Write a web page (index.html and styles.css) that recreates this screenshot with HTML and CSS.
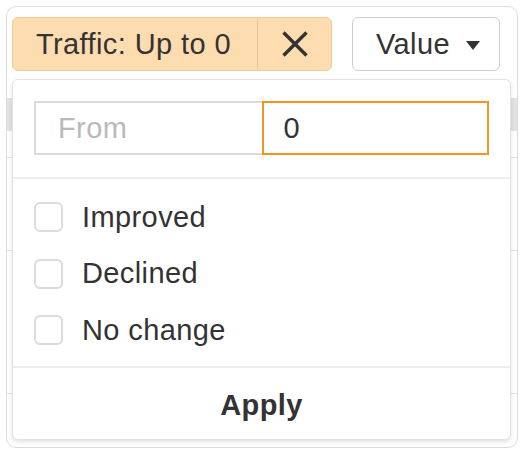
FILE: index.html
```html
<!DOCTYPE html>
<html>
<head>
<meta charset="utf-8">
<link rel="stylesheet" href="styles.css">
</head>
<body>
<div class="frame">
  <div class="toolbar">
    <div class="chip">
      <span class="chip-label">Traffic: Up to 0</span>
      <span class="chip-close">
        <svg width="26" height="26" viewBox="0 0 26 26"><path d="M1.5 1.5 L24.5 24.5 M24.5 1.5 L1.5 24.5" stroke="#333" stroke-width="3.4" stroke-linecap="butt"/></svg>
      </span>
    </div>
    <div class="value-btn">
      <span>Value</span>
      <svg class="caret" width="14" height="9" viewBox="0 0 14 9"><path d="M0 0 H14 L7 9 Z" fill="#333"/></svg>
    </div>
  </div>
  <div class="table">
    <div class="thead"></div>
    <div class="trow r1"></div>
    <div class="trow r2"></div>
    <div class="trow r3"></div>
  </div>
  <div class="popup">
    <div class="range">
      <div class="input from">From</div>
      <div class="input to focus">0</div>
    </div>
    <div class="checks">
      <label class="check"><span class="box"></span><span>Improved</span></label>
      <label class="check"><span class="box"></span><span>Declined</span></label>
      <label class="check"><span class="box"></span><span>No change</span></label>
    </div>
    <div class="apply">Apply</div>
  </div>
</div>
</body>
</html>
```

FILE: styles.css
```css
html, body {
  margin: 0;
  padding: 0;
  background: #fff;
}
body {
  font-family: "Liberation Sans", Arial, sans-serif;
  color: #333;
  font-size: 29px;
  letter-spacing: 0.4px;
}
.frame {
  position: relative;
  margin: 6px 0 0 6px;
  width: 512px;
  height: 442px;
  border: 1px solid #dcdcdc;
  border-radius: 10px;
  box-sizing: border-box;
  overflow: hidden;
}
.toolbar {
  display: flex;
  align-items: center;
  gap: 20px;
  padding: 10px 0 0 5px;
}
.chip {
  display: flex;
  height: 54px;
  width: 320px;
  background: #fddcb0;
  border: 1px solid #f3c995;
  border-radius: 6px;
  box-sizing: border-box;
}
.chip-label {
  display: flex;
  align-items: center;
  width: 245px;
  box-sizing: border-box;
  padding-left: 23px;
  border-right: 1px solid #eec596;
  white-space: nowrap;
}
.chip-close {
  display: flex;
  align-items: center;
  justify-content: center;
  flex: 1;
}
.value-btn {
  display: flex;
  align-items: center;
  gap: 16px;
  height: 54px;
  width: 148px;
  box-sizing: border-box;
  padding-left: 23px;
  border: 1px solid #cfcfcf;
  border-radius: 6px;
  background: #fff;
}
.caret {
  margin-top: 2px;
}
.table {
  margin-top: 27px;
}
.thead {
  height: 33px;
  background: #e2e2e2;
}
.trow {
  border-bottom: 1px solid #e2e2e2;
}
.r1 { height: 26px; }
.r2 { height: 92px; }
.r3 { height: 142px; }
.popup {
  position: absolute;
  left: 5px;
  top: 72px;
  width: 499px;
  height: 361px;
  box-sizing: border-box;
  background: #fff;
  border: 1px solid #e3e3e3;
  border-radius: 6px;
  box-shadow: 0 2px 4px rgba(0, 0, 0, 0.12);
  display: flex;
  flex-direction: column;
}
.range {
  display: flex;
  padding: 21px 21px 22px 21px;
  border-bottom: 2px solid #eeeeee;
}
.input {
  flex: 1;
  height: 54px;
  box-sizing: border-box;
  display: flex;
  align-items: center;
  border: 2px solid #dadada;
}
.from {
  color: #b9b9b9;
  padding-left: 22px;
  border-right: none;
}
.to {
  color: #333;
  padding-left: 20px;
}
.focus {
  border-color: #f7941e;
}
.checks {
  display: flex;
  flex-direction: column;
  padding: 10px 0 7px 21px;
  border-bottom: 2px solid #eeeeee;
}
.check {
  display: flex;
  align-items: center;
  gap: 19px;
  height: 56.5px;
}
.box {
  width: 29px;
  height: 30px;
  box-sizing: border-box;
  border: 2px solid #dcdcdc;
  border-radius: 6px;
  background: #fff;
}
.apply {
  flex: 1;
  display: flex;
  align-items: center;
  justify-content: center;
  font-weight: bold;
  padding-top: 4px;
}
```
